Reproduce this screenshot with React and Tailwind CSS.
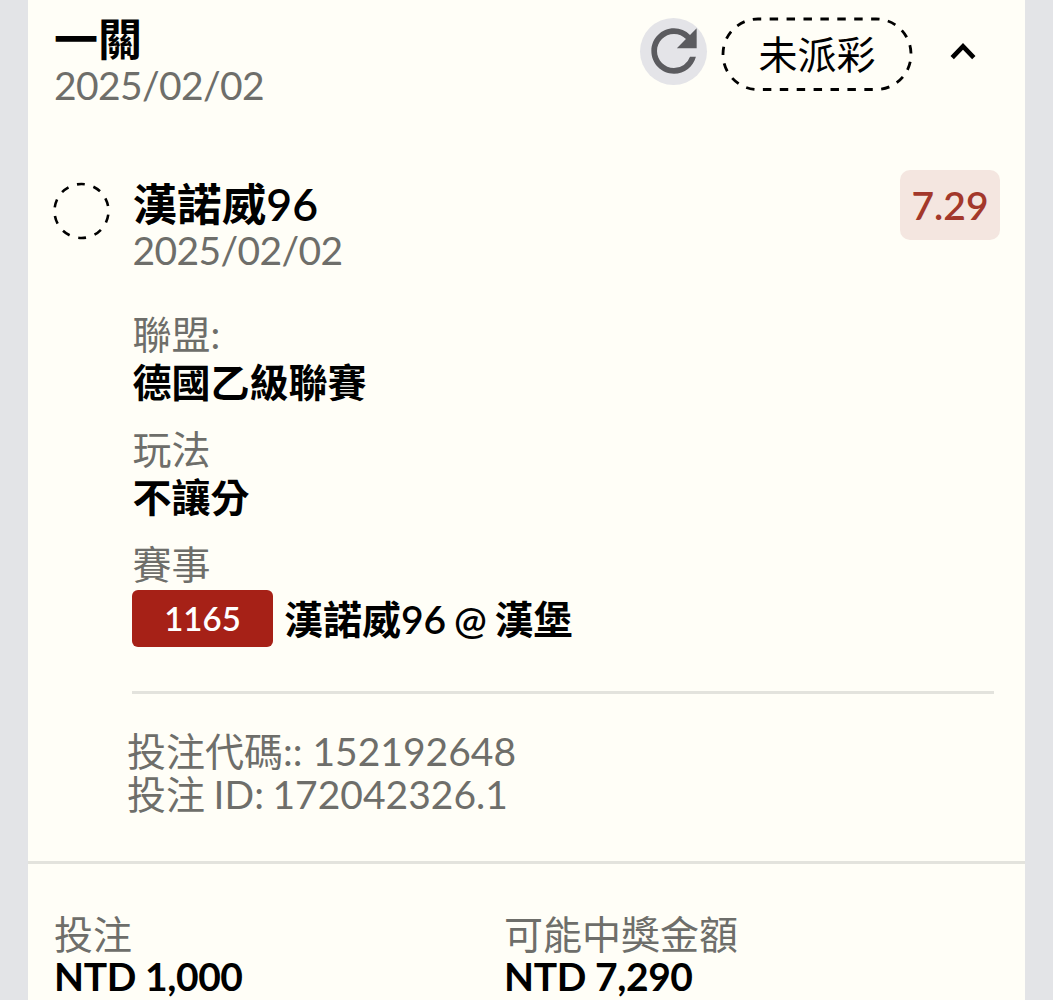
function Field({ label, value, className = "" }) {
  return (
    <div className={className}>
      <div className="h-[48px] text-[39px] leading-[48px] text-[#6e6e6a]">{label}</div>
      <div className="h-[49px] text-[39px] leading-[49px] font-semibold text-black">{value}</div>
    </div>
  );
}

function RefreshButton() {
  return (
    <button className="flex size-[67px] items-center justify-center rounded-full bg-[#e4e4e8]" aria-label="refresh">
      <svg width="68" height="68" viewBox="0 0 24 24" fill="#5b5b5f" className="shrink-0">
        <path d="M17.65 6.35A7.958 7.958 0 0 0 12 4c-4.42 0-7.99 3.58-7.99 8s3.57 8 7.99 8c3.73 0 6.84-2.55 7.73-6h-2.08A5.99 5.99 0 0 1 12 18c-3.31 0-6-2.69-6-6s2.69-6 6-6c1.66 0 3.14.69 4.22 1.78L13 11h7V4l-2.35 2.35z" />
      </svg>
    </button>
  );
}

function StatusPill({ children }) {
  return (
    <div className="relative ml-[14px] flex h-[74px] w-[192px] items-center justify-center">
      <svg className="absolute inset-0" width="192" height="74" viewBox="0 0 192 74" fill="none">
        <rect x="2" y="2" width="188" height="70.5" rx="35" pathLength="54" stroke="black" strokeWidth="2.8" strokeDasharray="1 1" strokeDashoffset="0.62" />
      </svg>
      <span className="text-[39px] leading-[74px] text-black">{children}</span>
    </div>
  );
}

export default function App() {
  return (
    <div className="h-[1000px] w-[1053px] overflow-hidden bg-[#e3e4e7] pr-[28px] pl-[28px] font-['Lato','Noto_Sans_CJK_TC',sans-serif]">
      <main className="flex h-full flex-col bg-[#fffef7]">
        <header className="flex h-[168px] items-start justify-between pl-[26px]">
          <div className="pt-[16px]">
            <h1 className="h-[46px] text-[44px] leading-[46px] font-semibold text-black">一關</h1>
            <div className="h-[46px] text-[39px] leading-[46px] tracking-[-0.62px] text-[#6e6e6a]">2025/02/02</div>
          </div>
          <div className="flex items-center pt-[17px] pr-[47px]">
            <div className="-mt-[6px]">
              <RefreshButton />
            </div>
            <StatusPill>未派彩</StatusPill>
            <svg className="-mt-[4px] ml-[35px]" width="30" height="30" viewBox="0 0 30 30" fill="none">
              <path d="M4.2 20.7L15 9.3L25.8 20.7" stroke="black" strokeWidth="4.6" />
            </svg>
          </div>
        </header>

        <section className="flex h-[693px] pl-[25px]">
          <svg className="mt-[14px] shrink-0" width="58" height="58" viewBox="0 0 58 58" fill="none">
            <circle cx="28.5" cy="29" r="27" pathLength="20" stroke="black" strokeWidth="2.6" strokeDasharray="0.95 1.05" strokeDashoffset="-0.45" />
          </svg>
          <div className="flex min-w-0 flex-1 flex-col pl-[21px]">
            <div className="flex justify-between pr-[25px]">
              <div className="pt-[13px] pl-[0.5px]">
                <h2 className="h-[46px] text-[44.6px] leading-[46px] font-semibold text-black">漢諾威96</h2>
                <div className="h-[46px] text-[39px] leading-[46px] tracking-[-0.62px] text-[#6e6e6a]">2025/02/02</div>
              </div>
              <div className="mt-[2px] flex h-[70px] w-[100px] items-center justify-center rounded-[10px] bg-[#f4e6e0] text-[39px] font-semibold text-[#a3382b]">
                7.29
              </div>
            </div>
            <Field className="mt-[37px] pl-[0.5px]" label="聯盟:" value="德國乙級聯賽" />
            <Field className="mt-[18px] pl-[0.5px]" label="玩法" value="不讓分" />
            <div className="mt-[18px] h-[48px] pl-[0.5px] text-[39px] leading-[48px] text-[#6e6e6a]">賽事</div>
            <div className="mt-[2px] flex h-[57px] items-center">
              <span className="flex h-[57px] w-[141px] items-center justify-center rounded-[6px] bg-[#a62117] text-[33px] font-semibold text-white">
                1165
              </span>
              <span className="pt-[2px] pl-[11px] text-[39px] leading-[57px] [word-spacing:-2px] font-semibold text-black">漢諾威96 @ 漢堡</span>
            </div>
            <div className="mt-[44px] mr-[31px] h-[3px] bg-[#e3e3dd]" />
            <div className="mt-[36px] -ml-[5px] text-[39px] leading-[43px] text-[#6e6e6a]">
              <div>投注代碼:: 152192648</div>
              <div className="[word-spacing:-1.4px]">投注 ID: 172042326.1</div>
            </div>
          </div>
        </section>

        <footer className="flex flex-1 border-t-[3px] border-[#e3e3dd] pt-[49px] pl-[26px] text-[39px] leading-[42px]">
          <div className="w-[450px]">
            <div className="text-[#6e6e6a]">投注</div>
            <div className="font-bold tracking-[-0.4px] text-black">NTD 1,000</div>
          </div>
          <div>
            <div className="text-[#6e6e6a]">可能中獎金額</div>
            <div className="font-bold tracking-[-0.4px] text-black">NTD 7,290</div>
          </div>
        </footer>
      </main>
    </div>
  );
}
